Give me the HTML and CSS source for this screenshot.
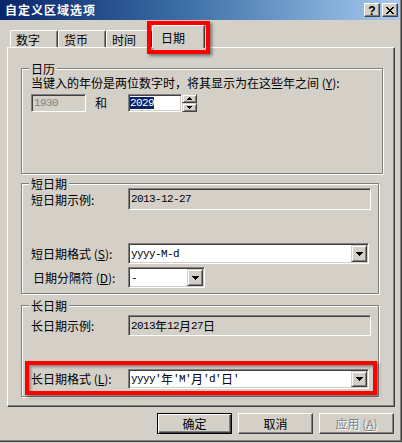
FILE: index.html
```html
<!DOCTYPE html>
<html lang="zh-CN">
<head>
<meta charset="utf-8">
<title>自定义区域选项</title>
<link rel="stylesheet" href="styles.css">
</head>
<body>
<div class="window">
  <div class="titlebar">
    <span class="title">自定义区域选项</span>
    <div class="capbtns">
      <div class="cap help">?</div>
      <div class="cap close">
        <svg width="8" height="7" viewBox="0 0 8 7"><path d="M0 0h2v1h-2zM6 0h2v1h-2zM1 1h2v1h-2zM5 1h2v1h-2zM2 2h4v1h-4zM3 3h2v1h-2zM2 4h4v1h-4zM1 5h2v1h-2zM5 5h2v1h-2zM0 6h2v1h-2zM6 6h2v1h-2z" fill="#000"/></svg>
      </div>
    </div>
  </div>

  <div class="tabs">
    <div class="tab t1">数字</div>
    <div class="tab t2">货币</div>
    <div class="tab t3">时间</div>
    <div class="tab active">日期</div>
  </div>

  <div class="panel">
    <div class="group g-cal">
      <div class="gtitle">日历</div>
      <div class="line">当键入的年份是两位数字时，将其显示为在这些年之间 (<u>Y</u>):</div>
      <div class="yrow">
        <div class="edit disabled yr1"><span class="a">1930</span></div>
        <span class="and">和</span>
        <div class="edit yr2"><span class="sel a">2029</span></div>
        <div class="spin">
          <div class="sb"><svg width="5" height="3" viewBox="0 0 5 3"><path d="M2 0h1v1h1v1h1v1h-5v-1h1v-1h1z" fill="#000"/></svg></div>
          <div class="sb"><svg width="5" height="3" viewBox="0 0 5 3"><path d="M0 0h5v1h-1v1h-1v1h-1v-1h-1v-1h-1z" fill="#000"/></svg></div>
        </div>
      </div>
    </div>

    <div class="group g-short">
      <div class="gtitle">短日期</div>
      <div class="frow r1">
        <span class="lbl low">短日期示例:</span>
        <div class="edit ro wide"><span class="a">2013-12-27</span></div>
      </div>
      <div class="frow r2">
        <span class="lbl">短日期格式 (<u>S</u>):</span>
        <div class="combo cwide">
          <span class="ctext a">yyyy-M-d</span>
          <div class="ddbtn"><svg width="7" height="4" viewBox="0 0 7 4"><path d="M0 0h7v1h-1v1h-1v1h-1v1h-1v-1h-1v-1h-1v-1h-1z" fill="#000"/></svg></div>
        </div>
      </div>
      <div class="frow r3">
        <span class="lbl ind">日期分隔符 (<u>D</u>):</span>
        <div class="combo csmall">
          <span class="ctext a">-</span>
          <div class="ddbtn"><svg width="7" height="4" viewBox="0 0 7 4"><path d="M0 0h7v1h-1v1h-1v1h-1v1h-1v-1h-1v-1h-1v-1h-1z" fill="#000"/></svg></div>
        </div>
      </div>
    </div>

    <div class="group g-long">
      <div class="gtitle">长日期</div>
      <div class="frow r1l">
        <span class="lbl">长日期示例:</span>
        <div class="edit ro wide"><span class="a">2013</span>年<span class="a">12</span>月<span class="a">27</span>日</div>
      </div>
      <div class="frow r2l">
        <span class="lbl">长日期格式 (<u>L</u>):</span>
        <div class="combo cwide cl">
          <span class="ctext"><span class="a">yyyy'</span>年<span class="a">'M'</span>月<span class="a">'d'</span>日<span class="a">'</span></span>
          <div class="ddbtn"><svg width="7" height="4" viewBox="0 0 7 4"><path d="M0 0h7v1h-1v1h-1v1h-1v1h-1v-1h-1v-1h-1v-1h-1z" fill="#000"/></svg></div>
        </div>
      </div>
    </div>
  </div>

  <div class="buttons">
    <div class="btn default">确定</div>
    <div class="btn">取消</div>
    <div class="btn disabled">应用 (<u>A</u>)</div>
  </div>

  <div class="mark m1"></div>
  <div class="mark m2"></div>
</div>
</body>
</html>
```

FILE: styles.css
```css
* { box-sizing: border-box; }
html, body { margin: 0; padding: 0; }
body {
  width: 402px;
  height: 443px;
  overflow: hidden;
  background: #D4D0C8;
  color: #000;
  font-family: "Noto Sans CJK SC", sans-serif;
  font-size: 12px;
  line-height: 12px;
}
.a {
  font-family: "Liberation Mono", monospace;
  font-size: 11px;
  letter-spacing: -0.6px;
}
u { text-decoration: underline; text-underline-offset: 1px; }

.window {
  position: relative;
  width: 402px;
  height: 442px;
  border-right: 1px solid #404040;
  border-bottom: 1px solid #404040;
  box-shadow: inset -1px -1px #808080;
}

/* title bar */
.titlebar {
  height: 20px;
  margin-right: 1px;
  padding: 0 2px 0 5px;
  display: flex;
  align-items: center;
  justify-content: space-between;
  background: linear-gradient(to right, #0A246A 0%, #3A6EA5 45%, #A6CAF0 100%);
}
.title {
  color: #fff;
  font-weight: bold;
  letter-spacing: 1px;
  line-height: 12px;
}
.capbtns { display: flex; gap: 2px; }
.cap {
  width: 16px;
  height: 14px;
  background: #D4D0C8;
  border: 1px solid;
  border-color: #fff #404040 #404040 #fff;
  box-shadow: inset -1px -1px #808080;
  display: flex;
  align-items: center;
  justify-content: center;
}
.help {
  font-family: "Liberation Sans", sans-serif;
  font-weight: bold;
  font-size: 12px;
  line-height: 10px;
  padding-top: 1px;
}

/* tabs */
.tabs {
  height: 27px;
  padding-left: 10px;
  display: flex;
  align-items: flex-end;
}
.tab {
  height: 17px;
  padding: 3px 0 0 5px;
  background: #D4D0C8;
  border: 1px solid;
  border-bottom: none;
  border-color: #fff #404040 transparent #fff;
  border-radius: 2px 2px 0 0;
  box-shadow: inset -1px 0 #808080;
  line-height: 12px;
}
.t1 { width: 48px; }
.t2 { width: 48px; }
.t3 { width: 46px; }
.tab.active {
  width: 53px;
  height: 23px;
  margin-bottom: -1px;
  padding: 6px 0 0 8px;
  position: relative;
  z-index: 1;
}

/* panel */
.panel {
  margin-left: 7px;
  width: 388px;
  height: 360px;
  border: 1px solid;
  border-color: #fff #404040 #404040 #fff;
  box-shadow: inset -1px -1px #808080;
}

.group {
  margin-left: 13px;
  border: 1px solid #808080;
  box-shadow: inset 1px 1px #fff, 1px 1px #fff;
}
.g-cal { margin-top: 20px; width: 362px; height: 106px; }
.g-short { margin-top: 9px; width: 358px; height: 111px; }
.g-long { margin-top: 11px; width: 358px; height: 92px; }

.gtitle {
  width: fit-content;
  height: 13px;
  line-height: 13px;
  margin: -7px 0 -6px 7px;
  padding: 0 2px;
  background: #D4D0C8;
}

.line {
  margin: 7px 0 0 9px;
  line-height: 13px;
  white-space: nowrap;
}

.edit {
  height: 18px;
  padding: 1px 1px 1px 2px;
  background: #fff;
  border: 1px solid;
  border-color: #808080 #fff #fff #808080;
  box-shadow: inset 1px 1px #404040, inset -1px -1px #D4D0C8;
  display: flex;
  align-items: center;
  white-space: nowrap;
}
.edit.disabled { background: #D4D0C8; color: #808080; }
.edit.ro { background: #D4D0C8; }

.yrow {
  margin: 5px 0 0 9px;
  height: 18px;
  display: flex;
  align-items: center;
}
.yr1 { width: 55px; padding-left: 2px; }
.and { margin-left: 9px; }
.yr2 { width: 54px; margin-left: 21px; padding-left: 1px; }
.sel { background: #0A246A; color: #fff; line-height: 12px; }
.spin {
  width: 15px;
  height: 18px;
  display: flex;
  flex-direction: column;
}
.sb {
  height: 9px;
  background: #D4D0C8;
  border: 1px solid;
  border-color: #D4D0C8 #404040 #404040 #D4D0C8;
  box-shadow: inset 1px 1px #fff, inset -1px -1px #808080;
  display: flex;
  align-items: center;
  justify-content: center;
}

/* form rows */
.frow {
  margin-left: 9px;
  display: flex;
  align-items: center;
}
.lbl { width: 97px; white-space: nowrap; }
.lbl.ind { padding-left: 2px; }
.lbl.low { padding-top: 2px; }
.r1 { margin-top: 4px; height: 22px; }
.r1 .edit { height: 22px; }
.r2 { margin-top: 33px; height: 21px; }
.r3 { margin-top: 3px; height: 21px; }
.r1l { margin-top: 9px; height: 21px; }
.r1l .edit { height: 21px; }
.r2l { margin-top: 33px; height: 20px; }
.wide { width: 243px; }

.combo {
  height: 21px;
  padding: 1px;
  background: #fff;
  border: 1px solid;
  border-color: #808080 #fff #fff #808080;
  box-shadow: inset 1px 1px #404040, inset -1px -1px #D4D0C8;
  display: flex;
  align-items: stretch;
}
.cl { height: 20px; }
.cwide { width: 241px; }
.csmall { width: 77px; }
.ctext {
  flex: 1;
  padding-left: 1px;
  display: flex;
  align-items: center;
  white-space: nowrap;
}
.ddbtn {
  width: 16px;
  background: #D4D0C8;
  border: 1px solid;
  border-color: #D4D0C8 #404040 #404040 #D4D0C8;
  box-shadow: inset 1px 1px #fff, inset -1px -1px #808080;
  display: flex;
  align-items: center;
  justify-content: center;
}

/* buttons */
.buttons {
  margin-top: 6px;
  padding-right: 7px;
  display: flex;
  justify-content: flex-end;
  gap: 6px;
}
.btn {
  width: 75px;
  height: 21px;
  background: #D4D0C8;
  border: 1px solid;
  border-color: #fff #404040 #404040 #fff;
  box-shadow: inset -1px -1px #808080;
  display: flex;
  align-items: center;
  justify-content: center;
}
.btn.default {
  border-color: #000;
  box-shadow: inset 1px 1px #fff, inset -1px -1px #404040, inset -2px -2px #808080;
}
.btn.disabled {
  color: #808080;
  text-shadow: 1px 1px #fff;
}

/* red annotation frames */
.mark {
  position: absolute;
  border: 4px solid #f00;
  box-shadow: 2px 2px 3px rgba(0, 0, 0, 0.45), inset 2px 2px 3px rgba(0, 0, 0, 0.35);
  pointer-events: none;
}
.m1 { left: 147px; top: 21px; width: 63px; height: 33px; }
.m2 { left: 25px; top: 361px; width: 352px; height: 34px; }
```
